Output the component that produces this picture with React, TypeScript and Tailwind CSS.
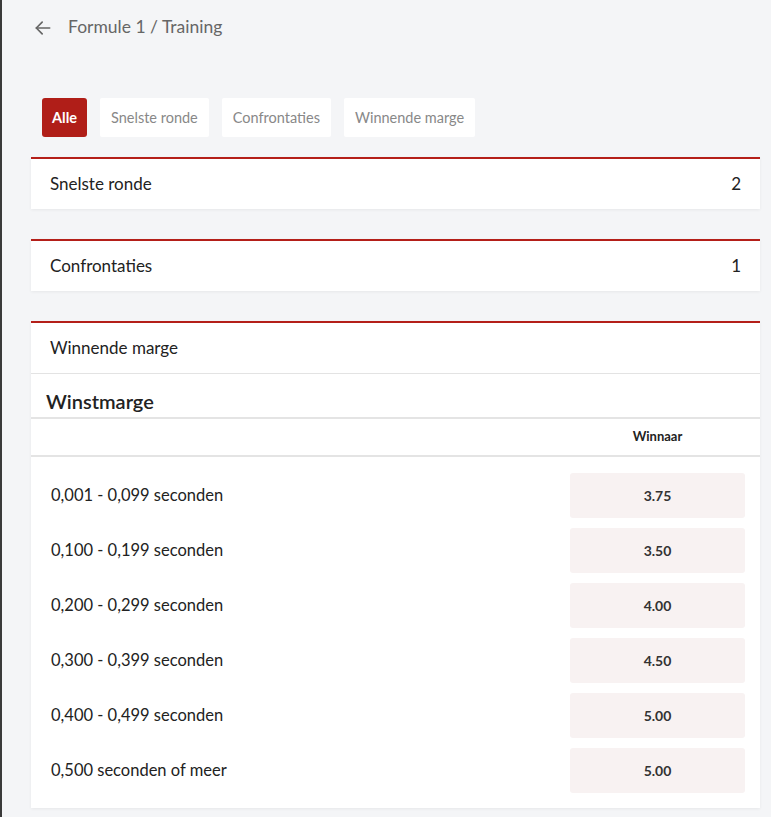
import React, { useState } from 'react';

const tabs = ['Alle', 'Snelste ronde', 'Confrontaties', 'Winnende marge'];

const margins = [
  { label: '0,001 - 0,099 seconden', odds: '3.75' },
  { label: '0,100 - 0,199 seconden', odds: '3.50' },
  { label: '0,200 - 0,299 seconden', odds: '4.00' },
  { label: '0,300 - 0,399 seconden', odds: '4.50' },
  { label: '0,400 - 0,499 seconden', odds: '5.00' },
  { label: '0,500 seconden of meer', odds: '5.00' },
];

const font = { fontFamily: 'Lato, "Open Sans", sans-serif' };

const MarketCard: React.FC<{ title: string; count?: number; children?: React.ReactNode }> = ({ title, count, children }) => (
  <div className="bg-white border-t-2 border-[#b41f19] shadow-[0_1px_3px_rgba(0,0,0,0.06)]">
    <div className="flex items-center justify-between h-[50px] pl-[19px] pr-[19px]">
      <span className="text-[17px] text-[#222]">{title}</span>
      {count !== undefined && <span className="text-[17px] text-[#222]">{count}</span>}
    </div>
    {children}
  </div>
);

export default function App() {
  const [active, setActive] = useState('Alle');

  return (
    <div className="min-h-[817px] bg-[#f4f5f7] border-l-2 border-[#3a3a3a]" style={font}>
      <div className="flex items-center h-[55px] pl-[31px] gap-[15px] text-[#666]">
        <svg width="20" height="20" viewBox="0 0 24 24" fill="none" stroke="#666" strokeWidth="2" strokeLinecap="round" strokeLinejoin="round">
          <path d="M20 12H4" />
          <path d="M11 5l-7 7 7 7" />
        </svg>
        <span className="text-[17.5px]">Formule 1 / Training</span>
      </div>

      <div className="ml-[29px] mr-[11px] mt-[43px]">
        <div className="flex gap-[13px] pl-[11px]">
          {tabs.map(t => (
            <button
              key={t}
              onClick={() => setActive(t)}
              className={
                t === active
                  ? 'h-[39px] px-[10px] rounded-[3px] bg-[#b01e18] text-white font-bold text-[14.5px]'
                  : 'h-[39px] px-[11px] rounded-[2px] bg-white text-[#888] text-[14.5px]'
              }
            >
              {t}
            </button>
          ))}
        </div>

        <div className="mt-[20px] flex flex-col gap-[30px]">
          <MarketCard title="Snelste ronde" count={2} />
          <MarketCard title="Confrontaties" count={1} />
          <MarketCard title="Winnende marge">
            <div className="border-t border-[#e3e3e3]">
              <div className="h-[43px] flex items-end pl-[15px] pb-[1px] text-[20px] font-semibold text-[#222]">Winstmarge</div>
              <div className="flex items-center h-[40px] border-t-2 border-b-2 border-[#e4e4e4]">
                <div className="flex-1" />
                <div className="w-[175px] mr-[15px] text-center text-[13px] font-bold text-[#222]">Winnaar</div>
              </div>
              <div className="pt-[11px] pb-[10px]">
                {margins.map(m => (
                  <div key={m.label} className="flex items-center py-[5px]">
                    <span className="flex-1 pl-[20px] text-[16.5px] text-[#222]">{m.label}</span>
                    <div className="w-[175px] h-[45px] mr-[15px] rounded-[3px] bg-[#f8f2f2] flex items-center justify-center text-[14px] font-bold text-[#333]">
                      {m.odds}
                    </div>
                  </div>
                ))}
              </div>
            </div>
          </MarketCard>
        </div>
      </div>
    </div>
  );
}
